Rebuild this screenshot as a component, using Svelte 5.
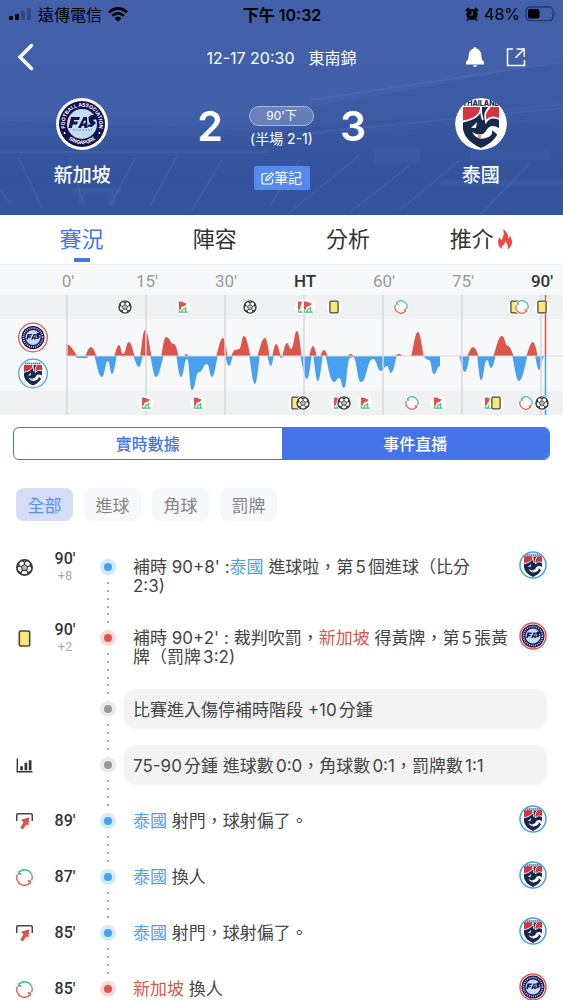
<script>
	const tabs = ['賽況', '陣容', '分析', '推介'];
	const filters = ['全部', '進球', '角球', '罰牌'];

	let activeTab = $state('賽況');
	let activeMode = $state('事件直播');
	let activeFilter = $state('全部');

	// ─── Momentum chart ─────────────────────────────
	const BASE_Y = 91;

	const ticks = [
		{ x: 67, label: "0'" },
		{ x: 146, label: "15'" },
		{ x: 225, label: "30'" },
		{ x: 304, label: 'HT', strong: true },
		{ x: 383, label: "60'" },
		{ x: 462, label: "75'" },
		{ x: 541, label: "90'", strong: true }
	];

	// [minute x, strength] runs for each side
	const homeRuns = [
		[[66, 12], [78, 0]],
		[[85, 0], [91, 9], [97, 0]],
		[[114, 0], [119, 11], [123, 2], [129, 14], [135, 0]],
		[[140, 0], [145, 26], [152, 0]],
		[[161, 0], [166, 19], [174, 12], [179, 0]],
		[[184, 0], [186, 2], [189, 0]],
		[[216, 0], [223, 18], [228, 0]],
		[[231, 0], [235, 6], [239, 7], [244, 20], [251, 0]],
		[[257, 0], [265, 18], [270, 0]],
		[[272, 0], [276, 12], [281, 0]],
		[[282, 0], [287, 13], [291, 7], [297, 25], [302, 0]],
		[[309, 0], [313, 10], [317, 0]],
		[[320, 0], [324, 6], [328, 0]],
		[[347, 0], [351, 2], [354, 0]],
		[[395, 0], [399, 2], [403, 0]],
		[[411, 0], [418, 24], [424, 0]],
		[[467, 0], [473, 9], [479, 0]],
		[[493, 0], [502, 20], [508, 10], [514, 0]],
		[[526, 0], [533, 14], [538, 0]]
	];
	const awayRuns = [
		[[75, 0], [78, 2], [86, 2], [89, 0]],
		[[94, 0], [102, 21], [108, 5], [112, 18], [117, 0]],
		[[122, 0], [124, 1], [126, 0]],
		[[133, 0], [139, 11], [143, 0]],
		[[150, 0], [156, 21], [164, 0]],
		[[176, 0], [181, 21], [187, 3], [192, 34], [199, 16], [207, 8], [212, 21], [218, 0]],
		[[225, 0], [229, 10], [233, 0]],
		[[249, 0], [255, 28], [260, 0]],
		[[267, 0], [271, 10], [274, 0]],
		[[279, 0], [281, 2], [284, 0]],
		[[300, 0], [307, 23], [312, 0]],
		[[313, 0], [318, 25], [323, 0]],
		[[325, 0], [334, 26], [339, 22], [344, 32], [350, 2], [353, 1], [361, 26], [373, 3], [381, 15], [387, 10], [391, 17], [397, 0]],
		[[423, 0], [429, 4], [434, 18], [440, 10], [440, 0]],
		[[459, 0], [465, 16], [470, 0]],
		[[477, 0], [481, 24], [487, 4], [491, 12], [496, 0]],
		[[512, 0], [519, 25], [528, 0]],
		[[535, 0], [539, 14], [544, 1], [545, 0]]
	];

	function wave(runs, dir) {
		return runs
			.map((pts) => {
				let d = `M${pts[0][0]} ${BASE_Y} V${BASE_Y + dir * pts[0][1]}`;
				for (let i = 1; i < pts.length; i++) {
					const [x0, v0] = pts[i - 1];
					const [x1, v1] = pts[i];
					const dx = x1 - x0;
					const a = x0 + dx * (v0 === 0 ? 0.2 : 0.5);
					const b = x1 - dx * (v1 === 0 ? 0.2 : 0.5);
					d += ` C${a} ${BASE_Y + dir * v0} ${b} ${BASE_Y + dir * v1} ${x1} ${BASE_Y + dir * v1}`;
				}
				return d + ' Z';
			})
			.join(' ');
	}

	const homeMarks = [
		['goal', 125], ['corner', 183], ['goal', 250], ['corner', 302], ['corner', 308], ['card', 334],
		['sub', 401], ['card', 515], ['sub', 522], ['card', 542]
	];
	const awayMarks = [
		['corner', 146], ['corner', 198], ['card', 296], ['goal', 303], ['corner', 338], ['goal', 344],
		['corner', 365], ['sub', 412], ['corner', 438], ['corner', 489], ['card', 496], ['sub', 526], ['goal', 542]
	];

	// ─── Match events ───────────────────────────────
	const names = { home: '新加坡', away: '泰國' };

	const events = [
		{ id: 1, icon: 'goal', minute: 90, extra: 8, team: 'away', before: "補時 90+8' :", after: ' 進球啦，第5個進球（比分', rest: '2:3)' },
		{ id: 2, icon: 'card', minute: 90, extra: 2, team: 'home', before: "補時 90+2' : 裁判吹罰，", after: ' 得黃牌，第5張黃', rest: '牌（罰牌3:2)' },
		{ id: 3, note: '比賽進入傷停補時階段 +10分鍾' },
		{ id: 4, icon: 'stats', note: '75-90分鍾 進球數0:0，角球數0:1，罰牌數1:1' },
		{ id: 5, icon: 'shot', minute: 89, team: 'away', before: '', after: ' 射門，球射偏了。' },
		{ id: 6, icon: 'sub', minute: 87, team: 'away', before: '', after: ' 換人' },
		{ id: 7, icon: 'shot', minute: 85, team: 'away', before: '', after: ' 射門，球射偏了。' },
		{ id: 8, icon: 'sub', minute: 85, team: 'home', before: '', after: ' 換人' }
	];
</script>

<!-- Event glyphs, drawn around 0,0 in a 16 unit box -->
{#snippet glyph(kind)}
	{#if kind === 'goal'}
		<circle r="7.2" fill="#fff" stroke="#3b3b3b" stroke-width="1.6" />
		<path d="M0-3 3-.8 1.9 2.7H-1.9L-3-.8Z" fill="#bbb" stroke="#3b3b3b" stroke-width="1" />
		<path d="M0-3V-5M3-.8 5.4-1.7M1.9 2.7 3.6 5M-1.9 2.7-3.6 5M-3-.8-5.4-1.7" stroke="#3b3b3b" stroke-width="1.1" />
		<path d="M-2.6-6.6 0-4.9 2.6-6.6M5.6-4.4 5.3-1.6 7.2.4M6.2 3.8 3.5 4.8 2.6 7M-6.2 3.8-3.5 4.8-2.6 7M-5.6-4.4-5.3-1.6-7.2.4" fill="none" stroke="#3b3b3b" stroke-width="1.3" />
	{:else if kind === 'corner'}
		<path d="M-4.8-6.6H-2L4.6-3.8 2-1.6-2.1 0V3.1H-4.8Z" fill="#dc5348" />
		<path d="M-4.4 3.6V6.2H5.6M-1.3 6C-1 3 1 1.6 3 2M3.2-.4V6" fill="none" stroke="#4bbd8a" stroke-width="1.4" />
	{:else if kind === 'card'}
		<rect x="-4.9" y="-7" width="9.8" height="14" rx="1.2" fill="#fbe973" stroke="#454545" stroke-width="1.5" />
	{:else if kind === 'sub'}
		<path d="M-5.4-4.8A7.2 7.2 0 0 1 6.7 2.6M-5.4-5.8V-3.4H-3" fill="none" stroke="#50b98d" stroke-width="1.5" />
		<path d="M5.4 4.8A7.2 7.2 0 0 1-6.7-2.6M5.4 5.8V3.4H3" fill="none" stroke="#e26058" stroke-width="1.5" />
	{:else if kind === 'stats'}
		<path d="M-6.8-6.5V5.9H7.5" fill="none" stroke="#333" stroke-width="1.3" />
		<path d="M-2.8 4.4V.8M1.3 4.4V-2.6M5.3 4.4V-5" fill="none" stroke="#333" stroke-width="2.5" />
	{:else if kind === 'shot'}
		<path d="M-7.3-.5V-6.2Q-7.3-7.2-6.3-7.2H6.3Q7.3-7.2 7.3-6.2V-.5" fill="none" stroke="#454545" stroke-width="1.4" />
		<path d="M-3.4-1.6 4.6-4 3.6 4.2 1.6 2.8-1.3 7.4-4.1 5.8-1 1Z" fill="#dc5348" />
	{/if}
{/snippet}

{#snippet crest(team, detailed)}
	{#if team === 'home'}
		<circle cx="26" cy="26" r="26" fill="#fff" />
		<circle cx="26" cy="26" r="23" fill="#12104f" />
		<circle cx="26" cy="26" r="15" fill="#c3dcee" />
		{#if detailed}
			<path id="arc-top" d="M9.2 30A17.3 17.3 0 1 1 42.8 30" fill="none" />
			<path id="arc-bottom" d="M8.4 36A20.3 20.3 0 0 0 43.6 36" fill="none" />
			<text class="ring-text"><textPath href="#arc-top" startOffset="50%">FOOTBALL ASSOCIATION</textPath></text>
			<text class="ring-text"><textPath href="#arc-bottom" startOffset="50%">SINGAPORE</textPath></text>
			<circle cx="8.6" cy="35" r="1" fill="#fff" />
			<circle cx="43.4" cy="35" r="1" fill="#fff" />
			<path d="M17 32H36" stroke="#7f95b5" stroke-dasharray="2 1" />
		{:else}
			<circle cx="26" cy="26" r="19" fill="none" stroke="#c9cbe0" stroke-width="3.6" stroke-dasharray="2 2" />
		{/if}
		<path d="M15 19H24L23 22H18L17.6 23.5H22L21 26.4H16.8L15.8 30H12.5ZM22 30 27.5 19H31L31.5 30H28.3V27.8H26L25 30ZM28 22.7H30L29 25.5H27ZM32.5 19 35 17H39L41 21 37 22 40 25 36 28.7H31.5L32.5 26.5H35L33 24Z" fill="#12104f" fill-rule="evenodd" />
	{:else}
		<circle cx="26" cy="26" r="26" fill="#fff" />
		{#if detailed}
			<text x="26" y="8" class="crest-name">THAILAND</text>
		{:else}
			<path d="M10 6H42" stroke="#53607c" stroke-width="3" stroke-dasharray="3 1" />
		{/if}
		<path d="M8 9H44V31Q42 43 26 50Q10 43 8 31Z" fill="#172a4c" />
		<path d="M8 9H25Q24 20 8 23Z" fill="#d8323e" />
		<path d="M44 9H33Q28 13 31 23L36 18 44 21Z" fill="#d8323e" />
		<path d="M26 9Q26 20 8 23.5M26 9Q26 18 28 22M35 9Q28 14 31 24Q35 17 44 21" fill="none" stroke="#fff" stroke-width="1.8" />
		<path d="M16 30 22 24 21 30ZM44 30Q35 25 31 33Q28 38 21 36L17 34Q22 43 31 40Q39 37 37 32L44 38Z" fill="#fff" />
		<path d="M23 36V40L26 40V36Z" fill="#cda565" />
	{/if}
{/snippet}

<main>
	<header class="hero">
		<svg class="stadium" viewBox="0 0 563 215" preserveAspectRatio="none" aria-hidden="true">
			<path d="M563 60Q430 88 280 112V135L563 102Z" fill="#34549b" opacity="0.4" />
			<path d="M0 120Q140 128 280 130L563 106V215H0Z" fill="#32539c" opacity="0.35" />
			<path d="M0 138H280L563 120V215H0Z" fill="#32529b" opacity="0.3" />
			<path d="M0 152H270M18 156 42 208M70 158 82 200M135 158 110 206M177 156 150 206M222 160 192 210M0 190 12 206M300 160 270 205M360 155 290 212M410 165 350 212M460 160 400 210M530 163 480 215M310 100 563 62M300 134 563 108" fill="none" stroke="#7792ca" stroke-width="1.5" opacity="0.18" />
			<path d="M374 148H420V163H374ZM72 188H122V193H72ZM78 193H86V206H78ZM108 193H116V206H108ZM470 150H550V160H470ZM440 180H563V186H440Z" fill="#7792ca" opacity="0.08" />
		</svg>

		<div class="status">
			<div class="carrier">
				<svg width="24" height="14" viewBox="0 0 24 14" aria-hidden="true">
					<rect x="1" y="9" width="4" height="4" rx="1" />
					<rect x="7" y="7" width="4" height="6" rx="1" />
					<rect x="13" y="4" width="4" height="9" rx="1" opacity="0.25" />
					<rect x="19" y="1" width="4" height="12" rx="1" opacity="0.25" />
				</svg>
				<span>遠傳電信</span>
				<svg width="20" height="15" viewBox="0 0 20 15" aria-hidden="true">
					<path d="M1 5.2Q10-2.6 19 5.2M4.2 8.8Q10 4 15.8 8.8" fill="none" stroke="#000" stroke-width="2.7" />
					<path d="M6.6 11.2Q10 8.4 13.4 11.2L10 14.8Z" />
				</svg>
			</div>
			<time class="clock">下午 10:32</time>
			<div class="power">
				<svg width="14" height="14" viewBox="0 0 14 14" aria-hidden="true">
					<circle cx="7" cy="7.5" r="5.6" />
					<path d="M1 4 4 1M13 4 10 1M3 12 2 13.5M11 12 12 13.5" stroke="#000" stroke-width="2" />
					<path d="M7.2 4V8H4.4" fill="none" stroke="#4562aa" stroke-width="1.2" />
				</svg>
				<span>48%</span>
				<svg width="31" height="16" viewBox="0 0 31 16" aria-hidden="true">
					<rect x="1" y="1" width="27" height="13.6" rx="4" fill="none" stroke="#263a6c" stroke-width="1.4" />
					<rect x="3" y="3" width="11.5" height="9.6" rx="2" />
					<path d="M29.5 5.5Q31.5 7.8 29.5 10Z" fill="#263a6c" />
				</svg>
			</div>
		</div>

		<nav class="topbar" aria-label="比賽">
			<button class="icon-btn" aria-label="返回">
				<svg width="17" height="28" viewBox="0 0 17 28"><path d="M14.5 2.5 3 14 14.5 25.5" fill="none" stroke="#fff" stroke-width="3.4" stroke-linecap="round" /></svg>
			</button>
			<div class="fixture"><span>12-17 20:30</span><span>東南錦</span></div>
			<div class="actions">
				<button class="icon-btn" aria-label="通知">
					<svg width="20" height="22" viewBox="0 0 20 22" fill="#fff"><path d="M10 1Q11.5 1 11.5 2.5Q16 4 16.3 9Q16.3 14 19 16V18.5H1V16Q3.7 14 3.7 9Q4 4 8.5 2.5Q8.5 1 10 1ZM8 19.3H12Q11.7 21 10 21Q8.3 21 8 19.3Z" /></svg>
				</button>
				<button class="icon-btn" aria-label="分享">
					<svg width="20" height="20" viewBox="0 0 20 20" fill="none" stroke="#fff" stroke-width="1.5"><path d="M7 2H1.5V18.5H18.5V13M10.5 2H18.3V9.7M18 2.2 9.5 10.8" /></svg>
				</button>
			</div>
		</nav>

		<section class="match">
			<div class="team">
				<svg width="52" height="52" viewBox="0 0 52 52" role="img" aria-label="新加坡">{@render crest('home', true)}</svg>
				<h2>新加坡</h2>
			</div>
			<div class="middle">
				<div class="scoreline">
					<strong>2</strong>
					<div class="period">
						<span class="pill">90'下</span>
						<span class="half">(半場 2-1)</span>
					</div>
					<strong>3</strong>
				</div>
				<button class="note-btn">
					<svg width="13" height="13" viewBox="0 0 13 13" fill="none" stroke="#fff" stroke-width="1.2"><path d="M6.5 1.5H3Q1 1.5 1 3.5V10Q1 12 3 12H9.5Q11.5 12 11.5 10V7M5 8.2 5.4 5.8 10.4.9 12.2 2.6 7.2 7.6Z" /></svg>筆記
				</button>
			</div>
			<div class="team">
				<svg class="clipped" width="52" height="52" viewBox="0 0 52 52" role="img" aria-label="泰國">{@render crest('away', true)}</svg>
				<h2>泰國</h2>
			</div>
		</section>
	</header>

	<nav class="tabs" aria-label="分頁">
		{#each tabs as tab (tab)}
			<button class:active={activeTab === tab} onclick={() => (activeTab = tab)}>
				{tab}{#if tab === '推介'}<svg width="16" height="22" viewBox="0 0 16 22" aria-hidden="true"><path d="M6 1Q12 5 11 11Q13 10 12.5 7Q15.5 11 15 15Q14 20 10.5 21Q12 17 8 13Q8 17 5.5 17.5Q4.5 19 5.5 21Q1 19 1 14Q1 11 2.5 9Q3 12 4.5 12Q8 7 6 1Z" fill="#ee4a3f" /></svg>{/if}
			</button>
		{/each}
	</nav>

	<section class="chart">
		<svg viewBox="0 0 563 150" role="img" aria-label="攻勢走勢">
			<rect width="563" height="150" fill="#f7f8fa" />
			<rect y="30" width="563" height="24" fill="#f0f1f3" />
			<rect y="126" width="563" height="24" fill="#f0f1f3" />
			<path d={wave(homeRuns, -1)} fill="#dc564b" />
			<path d={wave(awayRuns, 1)} fill="#48a1ee" />
			{#each ticks as tick (tick.x)}
				<text x={tick.x + 1} y="22" class="tick" class:strong={tick.strong}>{tick.label}</text>
				<path d="M{tick.x} 30V150" stroke="#d8d9db" stroke-width="1.5" />
			{/each}
			<path d="M66 91H563" stroke="#d8d9db" />
			<path d="M545.5 30V91" stroke="#dc564b" stroke-width="1.5" />
			<path d="M545.5 91V150" stroke="#48a1ee" stroke-width="1.5" />

			{#each [[homeMarks, 42], [awayMarks, 138]] as [marks, y] (y)}
				{#each marks as [kind, x] (x)}
					<g transform="translate({x}, {y})">
						<circle r="7.5" fill="#fff" />
						<g transform="scale(0.84)">{@render glyph(kind)}</g>
					</g>
				{/each}
			{/each}

			<g transform="translate(20, 59.5) scale(0.5)">{@render crest('home', false)}</g>
			<circle cx="33" cy="72.5" r="14.3" fill="none" stroke="#e0584e" stroke-width="1.3" />
			<circle cx="33" cy="108.5" r="14.3" fill="#fff" stroke="#48a1ee" stroke-width="1.3" />
			<g transform="translate(20, 95.5) scale(0.5)">{@render crest('away', false)}</g>
		</svg>
	</section>

	<div class="modes">
		{#each ['實時數據', '事件直播'] as mode (mode)}
			<button class:active={activeMode === mode} onclick={() => (activeMode = mode)}>{mode}</button>
		{/each}
	</div>

	<div class="filters">
		{#each filters as filter (filter)}
			<button class:active={activeFilter === filter} onclick={() => (activeFilter = filter)}>{filter}</button>
		{/each}
	</div>

	<ol class="events">
		{#each events as event (event.id)}
			<li>
				<div class="kind">
					{#if event.icon}
						<svg width="17" height="17" viewBox="-8 -8 16 16" aria-hidden="true">{@render glyph(event.icon)}</svg>
					{/if}
				</div>
				<div class="minute">
					{#if event.minute}<b>{event.minute}'</b>{/if}
					{#if event.extra}<small>+{event.extra}</small>{/if}
				</div>
				<div class="rail"><span class="dot {event.team ?? 'neutral'}"></span></div>
				{#if event.note}
					<p class="note">{event.note}</p>
				{:else}
					<p class="text">
						{event.before}<span class={event.team}>{names[event.team]}</span>{event.after}
						{#if event.rest}<br />{event.rest}{/if}
					</p>
					<svg class="badge" width="28" height="28" viewBox="-2 -2 56 56" role="img" aria-label={names[event.team]}>
						{@render crest(event.team, false)}
						<circle cx="26" cy="26" r="26" fill="none" stroke={event.team === 'home' ? '#e0584e' : '#48a1ee'} stroke-width="3" />
					</svg>
				{/if}
			</li>
		{/each}
	</ol>
</main>

<style>
	:global(body) {
		margin: 0;
		background: #fff;
	}
	main {
		font-family: Inter, 'Noto Sans CJK TC', sans-serif;
		color: #444;
		height: 100vh;
		overflow: hidden;
	}
	button {
		font: inherit;
		color: inherit;
		border: 0;
		padding: 0;
		background: none;
		cursor: pointer;
	}
	svg {
		display: block;
		flex: none;
	}
	h2,
	p,
	ol {
		margin: 0;
		padding: 0;
	}

	/* ─── Header ─────────────────────────────────── */
	.hero {
		position: relative;
		height: 215px;
		color: #fff;
		background: linear-gradient(#4361aa, #4260aa 50%, #37569f 80%, #3857a0);
	}
	.stadium {
		position: absolute;
		inset: 0;
		width: 100%;
		height: 100%;
	}
	.status,
	.topbar,
	.match {
		position: relative;
		display: grid;
		align-items: center;
	}
	.status {
		grid-template-columns: 1fr auto 1fr;
		height: 28px;
		padding: 0 7px 0 8px;
		color: #000;
		font-size: 16px;
	}
	.carrier,
	.power {
		display: flex;
		align-items: center;
		gap: 6px;
	}
	.power {
		justify-content: flex-end;
		gap: 5px;
	}
	.clock {
		font-weight: 600;
	}
	.topbar {
		grid-template-columns: 1fr auto 1fr;
		height: 58px;
		padding: 0 37px 0 17px;
	}
	.fixture {
		display: flex;
		align-items: baseline;
		gap: 14px;
		margin-left: 20px;
		font-size: 16px;
	}
	.actions {
		display: flex;
		justify-content: flex-end;
		align-items: center;
		gap: 21px;
	}
	.match {
		grid-template-columns: 1fr 234px 1fr;
		align-items: start;
		padding-top: 12px;
	}
	.team {
		display: flex;
		flex-direction: column;
		align-items: center;
		gap: 12px;
	}
	.team h2 {
		font-size: 19px;
		line-height: 28px;
		font-weight: 500;
	}
	.clipped {
		border-radius: 50%;
	}
	.middle {
		display: flex;
		flex-direction: column;
		align-items: center;
		gap: 12px;
		padding-top: 2px;
	}
	.scoreline {
		display: flex;
		align-items: center;
		gap: 25px;
		height: 54px;
	}
	.scoreline strong {
		width: 28px;
		padding-bottom: 3px;
		text-align: center;
		font-size: 41px;
		line-height: 50px;
		font-weight: 600;
	}
	.period {
		display: flex;
		flex-direction: column;
		align-items: center;
		gap: 3px;
		width: 65px;
		white-space: nowrap;
	}
	.pill {
		box-sizing: border-box;
		width: 65px;
		border: 1px solid #a9b7da;
		border-radius: 10px;
		background: rgba(255, 255, 255, 0.22);
		font-size: 12px;
		line-height: 18px;
		text-align: center;
	}
	.half {
		font-size: 14px;
		line-height: 20px;
	}
	.note-btn {
		display: flex;
		align-items: center;
		justify-content: center;
		width: 56px;
		height: 24px;
		border-radius: 2px;
		background: #5489ee;
		font-size: 14px;
		line-height: 20px;
	}
	.ring-text {
		font-size: 5px;
		font-weight: 700;
		fill: #fff;
		text-anchor: middle;
	}
	.crest-name {
		font-size: 7px;
		font-weight: 800;
		fill: #172a4c;
		text-anchor: middle;
	}

	/* ─── Tabs ───────────────────────────────────── */
	.tabs {
		display: flex;
		padding: 0 15px;
		border-bottom: 1px solid #eceef0;
	}
	.tabs button {
		position: relative;
		display: flex;
		flex: 1;
		align-items: center;
		justify-content: center;
		gap: 3px;
		box-sizing: border-box;
		height: 49px;
		padding-bottom: 2px;
		font-size: 22px;
		line-height: 30px;
		color: #333;
	}
	.tabs .active {
		color: #4573e8;
	}
	.tabs .active::after {
		content: '';
		position: absolute;
		bottom: 2px;
		left: calc(50% - 8px);
		width: 16px;
		height: 4px;
		background: #4573e8;
	}

	/* ─── Chart ──────────────────────────────────── */
	.chart svg {
		width: 100%;
		height: auto;
	}
	.tick {
		font-family: Roboto, sans-serif;
		font-size: 17px;
		fill: #999;
		text-anchor: middle;
	}
	.tick.strong {
		font-weight: 500;
		fill: #333;
	}

	/* ─── Switches ───────────────────────────────── */
	.modes {
		display: flex;
		margin: 12px 13px 28px;
		border: 1px solid #4573e8;
		border-radius: 6px;
		overflow: hidden;
	}
	.modes button {
		flex: 1;
		height: 31px;
		font-size: 16px;
		line-height: 28px;
		font-weight: 500;
		color: #4573e8;
	}
	.modes .active {
		color: #fff;
		background: #4573e8;
	}
	.filters {
		display: flex;
		gap: 11px;
		padding: 0 16px;
	}
	.filters button {
		width: 57px;
		height: 33px;
		border-radius: 8px;
		background: #f7f8fb;
		font-size: 17px;
		color: #858585;
	}
	.filters .active {
		color: #5b8eee;
		background: #d3def6;
	}

	/* ─── Events ─────────────────────────────────── */
	.events {
		padding: 18px 16px 0;
		list-style: none;
	}
	.events li {
		display: grid;
		grid-template-columns: 17px 64px 22px 1fr 28px;
		min-height: 56px;
	}
	.kind,
	.minute {
		display: flex;
		flex-direction: column;
		align-items: center;
		justify-content: center;
		height: 56px;
	}
	.minute {
		font-family: Roboto, sans-serif;
	}
	.minute b {
		font-size: 16px;
		line-height: 18px;
		font-weight: 500;
		color: #333;
	}
	.minute small {
		font-size: 13px;
		line-height: 16px;
		color: #aaa;
	}
	.rail {
		padding-top: 20px;
		background: radial-gradient(circle, #aaa 1px, transparent 1px) center top / 8px 8px repeat-y;
	}
	li:first-child .rail {
		background-clip: content-box;
	}
	.dot {
		box-sizing: border-box;
		display: block;
		width: 16px;
		height: 16px;
		margin: 0 auto;
		border: 4px solid;
		border-radius: 50%;
		box-shadow: 0 0 0 1px #fff;
	}
	.dot.home {
		background: #dc564b;
		border-color: #f6d9d8;
	}
	.dot.away {
		background: #48a1ee;
		border-color: #d0eafb;
	}
	.dot.neutral {
		background: #999;
		border-color: #ebebeb;
	}
	.text,
	.note {
		font-size: 17px;
		line-height: 19px;
		text-autospace: normal;
	}
	.text {
		padding: 19px 4px 14px 14px;
	}
	.text .home {
		color: #dc564b;
	}
	.text .away {
		color: #48a1ee;
	}
	.note {
		grid-column: 4 / 6;
		box-sizing: border-box;
		min-height: 40px;
		margin: 8px 0 8px 5px;
		padding: 12px 9px 9px;
		border-radius: 12px;
		background: #f3f3f3;
	}
	.badge {
		margin-top: 12px;
	}
</style>
